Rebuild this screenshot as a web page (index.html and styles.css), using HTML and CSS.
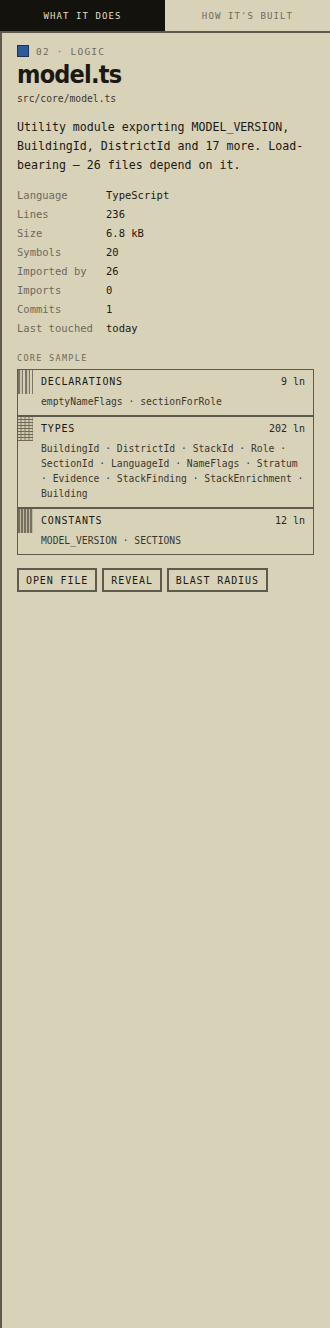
FILE: index.html
```html
<!DOCTYPE html>
<html>
<head>
    <title>model.ts</title>
    <link rel="stylesheet" href="styles.css">
</head>
<body>
    <div class="tabs">
        <div class="tab active">WHAT IT DOES</div>
        <div class="tab">HOW IT'S BUILT</div>
    </div>

    <div class="panel">
        <div class="tag"><span class="swatch"></span>02 · LOGIC</div>
        <h1 class="title">model.ts</h1>
        <div class="path">src/core/model.ts</div>

        <p class="desc">Utility module exporting MODEL_VERSION, BuildingId, DistrictId and 17 more. Load-bearing — 26 files depend on it.</p>

        <div class="stats">
            <div class="k">Language</div><div class="v">TypeScript</div>
            <div class="k">Lines</div><div class="v">236</div>
            <div class="k">Size</div><div class="v">6.8 kB</div>
            <div class="k">Symbols</div><div class="v">20</div>
            <div class="k">Imported by</div><div class="v">26</div>
            <div class="k">Imports</div><div class="v">0</div>
            <div class="k">Commits</div><div class="v">1</div>
            <div class="k">Last touched</div><div class="v">today</div>
        </div>

        <div class="label">CORE SAMPLE</div>
        <div class="core">
            <div class="layer">
                <div class="strip bars"></div>
                <div class="layer-body">
                    <div class="layer-head"><span>DECLARATIONS</span><span class="ln">9 ln</span></div>
                    <div class="names">emptyNameFlags · sectionForRole</div>
                </div>
            </div>
            <div class="layer">
                <div class="strip brick"></div>
                <div class="layer-body">
                    <div class="layer-head"><span>TYPES</span><span class="ln">202 ln</span></div>
                    <div class="names">BuildingId · DistrictId · StackId · Role · SectionId · LanguageId · NameFlags · Stratum · Evidence · StackFinding · StackEnrichment · Building</div>
                </div>
            </div>
            <div class="layer">
                <div class="strip fine"></div>
                <div class="layer-body">
                    <div class="layer-head"><span>CONSTANTS</span><span class="ln">12 ln</span></div>
                    <div class="names">MODEL_VERSION · SECTIONS</div>
                </div>
            </div>
        </div>

        <div class="actions">
            <button class="btn">OPEN FILE</button>
            <button class="btn">REVEAL</button>
            <button class="btn">BLAST RADIUS</button>
        </div>
    </div>
</body>
</html>
```

FILE: styles.css
```css
html
{
    background-color: #d8d2b8;
}
body
{
    margin: 0;
    min-height: 1328px;
    font-family: "DejaVu Sans Mono", monospace;
    color: #1a1913;
    background-color: #d8d2b8;
    display: flex;
    flex-direction: column;
}
.tabs
{
    display: flex;
    height: 31px;
    border-bottom: 2px solid #5e5a4e;
}
.tab
{
    flex: 1;
    display: flex;
    align-items: center;
    justify-content: center;
    font-size: 9px;
    letter-spacing: 1.1px;
    color: #6e6a5c;
}
.tab.active
{
    background-color: #13120d;
    color: #e4dec6;
}
.panel
{
    flex: 1;
    border-left: 2px solid #5e5a4e;
    padding: 12px 16px 0 15px;
}
.tag
{
    display: flex;
    align-items: center;
    gap: 7px;
    font-size: 9.5px;
    letter-spacing: 1.2px;
    color: #6e6a5c;
}
.swatch
{
    width: 10px;
    height: 10px;
    background-color: #2b5b9b;
    border: 1px solid #1e3150;
}
.title
{
    margin: 3px 0 0 0;
    font-family: "DejaVu Sans", sans-serif;
    font-stretch: condensed;
    font-weight: bold;
    font-size: 25px;
    letter-spacing: -0.8px;
    line-height: 30px;
}
.path
{
    font-size: 9.7px;
    color: #3a382e;
    margin-top: 3px;
}
.desc
{
    margin: 14px 0 0 0;
    font-size: 11.6px;
    line-height: 19px;
}
.stats
{
    display: grid;
    grid-template-columns: 89px 1fr;
    margin-top: 11px;
    font-size: 10.5px;
    line-height: 19px;
}
.stats .k
{
    color: #6e6a5c;
}
.label
{
    margin-top: 15px;
    font-size: 8.5px;
    letter-spacing: 1.3px;
    color: #6e6a5c;
}
.core
{
    margin-top: 6px;
    border: 1px solid #5e5a4e;
}
.layer
{
    display: flex;
    border-top: 2px solid #5e5a4e;
}
.layer:first-child
{
    border-top: none;
}
.strip
{
    width: 15px;
    height: 24px;
    flex-shrink: 0;
}
.bars
{
    background: repeating-linear-gradient(90deg, #7a7566 0 2px, #c9c3a9 2px 4px, #7a7566 4px 5px, #d8d2b8 5px 7px);
}
.fine
{
    background: repeating-linear-gradient(90deg, #76715f 0 2px, #bdb79e 2px 3px);
}
.brick
{
    background-color: #a9a38b;
    background-image:
        repeating-linear-gradient(0deg, #6e6958 0 1px, transparent 1px 3px),
        repeating-linear-gradient(90deg, #d0caaf 0 2px, transparent 2px 4px);
}
.layer-body
{
    flex: 1;
    padding: 5px 8px 6px 8px;
}
.layer-head
{
    display: flex;
    justify-content: space-between;
    font-size: 10px;
    letter-spacing: 0.8px;
    line-height: 14px;
}
.ln
{
    letter-spacing: 0;
    color: #2a2820;
}
.names
{
    margin-top: 5px;
    font-size: 9.7px;
    line-height: 15px;
    color: #3a382e;
}
.actions
{
    display: flex;
    gap: 5px;
    margin-top: 13px;
}
.btn
{
    font-family: "DejaVu Sans Mono", monospace;
    font-size: 10px;
    letter-spacing: 0.9px;
    color: #1a1913;
    background-color: #d8d2b8;
    border: 2px solid #5e5a4e;
    height: 24px;
    padding: 0 7px;
}
```
